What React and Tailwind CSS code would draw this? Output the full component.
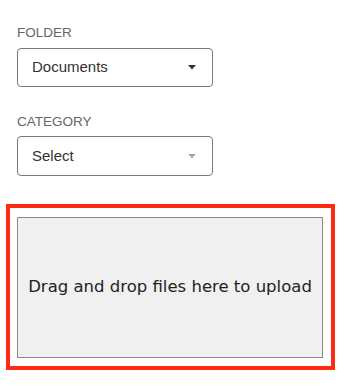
export default function App() {
  return (
    <div className="w-[350px] h-[387px] bg-white font-['Liberation_Sans',Arial,sans-serif]">
      <div className="pt-[25px] pl-[17px]">
        {/* folder */}
        <div className="text-[13.5px] leading-[15px] text-[#666]">FOLDER</div>
        <div className="mt-[8px] w-[196px] h-[39px] border border-[#7a7a7a] rounded-[4px] flex items-center justify-between pl-[14px] pr-[16px]">
          <span className="text-[15px] text-[#333]">Documents</span>
          <svg width="8" height="5" viewBox="0 0 8 5">
            <path d="M0 0h8L4 4.5z" fill="#333" />
          </svg>
        </div>

        {/* category */}
        <div className="mt-[27px] text-[13.5px] leading-[15px] text-[#666]">CATEGORY</div>
        <div className="mt-[7px] w-[196px] h-[40px] border border-[#7a7a7a] rounded-[4px] flex items-center justify-between pl-[14px] pr-[16px]">
          <span className="text-[15px] text-[#333]">Select</span>
          <svg width="8" height="5" viewBox="0 0 8 5">
            <path d="M0 0h8L4 4.5z" fill="#aaa" />
          </svg>
        </div>
      </div>

      {/* upload zone */}
      <div className="ml-[6px] mt-[28px] w-[329px] h-[166px] border-[4px] border-[#ff2a12] pt-[9px] pl-[7px]">
        <div className="w-[306px] h-[141px] bg-[#f0f0f0] border-[1.5px] border-[#8a8a8a] flex items-center justify-center">
          <span className="font-['DejaVu_Sans',Verdana,sans-serif] text-[16.5px] text-[#222]">
            Drag and drop files here to upload
          </span>
        </div>
      </div>
    </div>
  )
}
